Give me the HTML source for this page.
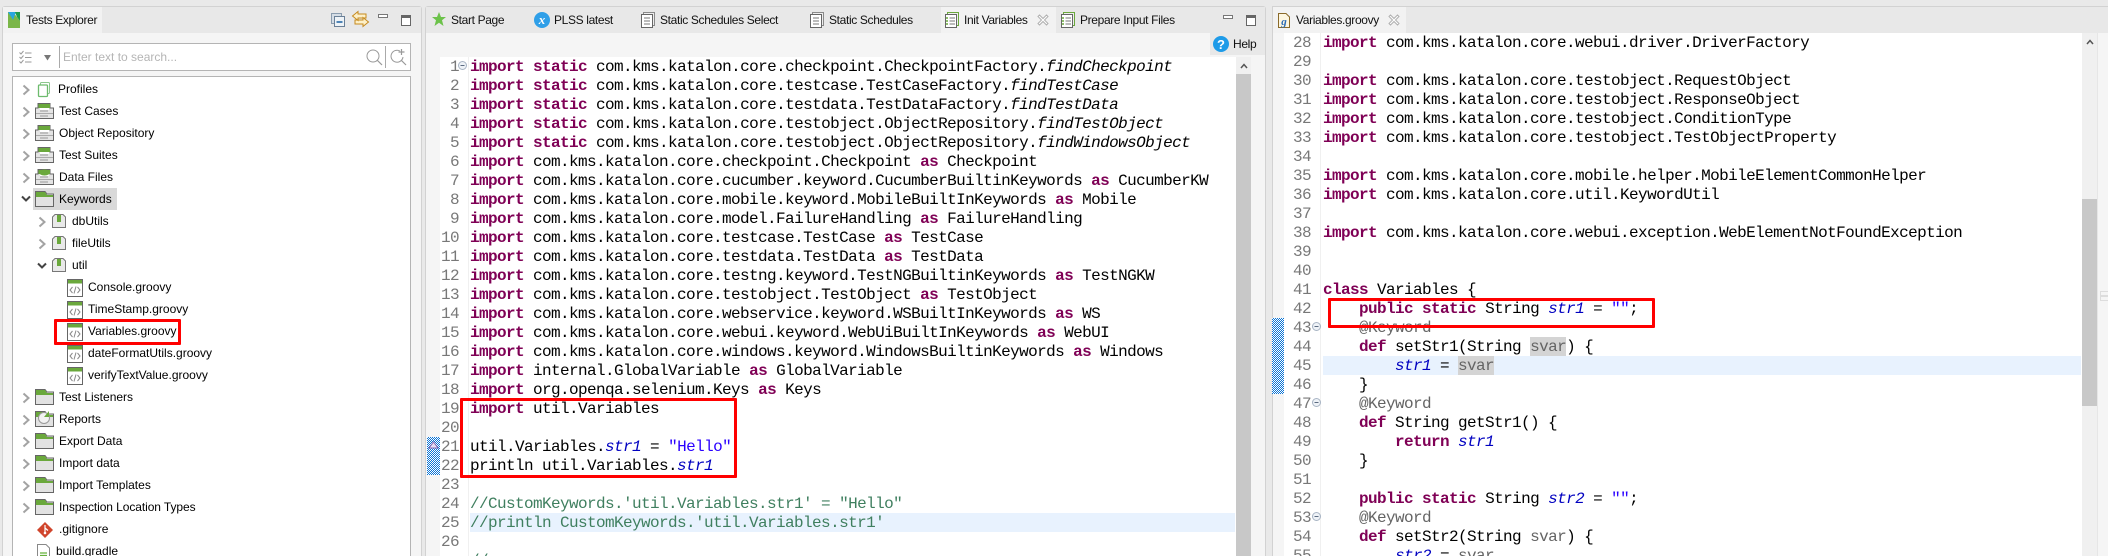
<!DOCTYPE html>
<html><head><meta charset="utf-8"><title>Tests Explorer</title>
<style>
html,body{margin:0;padding:0;width:2108px;height:556px;overflow:hidden}
body{background:#e9e9e9;font:12px "Liberation Sans",sans-serif;color:#111}
#p{position:absolute;left:0;top:0;width:2108px;height:556px;overflow:hidden;background:#e9e9e9}
.a{position:absolute}
.t{position:absolute;white-space:nowrap;line-height:16px;color:#111;letter-spacing:-.35px}
.r{position:absolute;white-space:nowrap;line-height:22px;height:22px;color:#000}
svg{position:absolute;overflow:visible}
pre{position:absolute;margin:0;font:16px/19px "Liberation Mono",monospace;letter-spacing:-.6px;color:#000;white-space:pre}
pre.n{color:#787878;text-align:right;letter-spacing:-.6px}
b{color:#7f0055;font-weight:bold}
i{font-style:italic}
i.f{color:#0000c0}
u{text-decoration:none;color:#2a00ff}
s{text-decoration:none;color:#3f7f5f}
em{font-style:normal;color:#646464}
.red{position:absolute;border:3px solid #f00;box-sizing:border-box;border-radius:1px}
.dith{position:absolute;background:repeating-conic-gradient(#0a74d6 0 25%,#fff 0 50%) 0 0/2px 2px}
</style></head><body><div id="p">
<svg width="0" height="0" style="position:absolute">
<defs>
<symbol id="chev" viewBox="0 0 8 12"><path d="M1.5 1.5L6.5 6L1.5 10.5" fill="none" stroke="#a3a3a3" stroke-width="2"/></symbol>
<symbol id="down" viewBox="0 0 10 8"><path d="M1 1.5L5 5.5L9 1.5" fill="none" stroke="#444" stroke-width="2"/></symbol>
<symbol id="folder" viewBox="0 0 19 16"><path d="M.5 5.5V.5H10L12 3H18.5V15.5H.5Z" fill="#e2e2e2" stroke="#666"/><path d="M1 1H10L12 4H18V6H1Z" fill="#6aa83c"/></symbol>
<symbol id="box" viewBox="0 0 19 16"><path d="M3 .5H15V5H18.5V15.5H.5V5H3Z" fill="#e4e4e4" stroke="#666"/><rect x="3.500" y="1" width="11.500" height="4" fill="#6aa83c"/><rect x="5" y="5" width="9" height="2" fill="#fff"/><path d="M1 10.500H18" stroke="#aaa"/><path d="M5 8H13M5 13H13" stroke="#999"/></symbol>
<symbol id="pkg" viewBox="0 0 14 14"><path d="M.5 13.500V3L3 .5H11L13.500 3V13.500Z" fill="#e9e9e9" stroke="#777"/><rect x="5" y="1" width="4" height="7" fill="#6aa83c"/></symbol>
<symbol id="gv" viewBox="0 0 16 18"><rect x=".5" y=".5" width="15" height="17" fill="#fff" stroke="#666"/><rect x="1" y="1" width="14" height="3.500" fill="#6aa83c"/><path d="M5.500 8L3 11L5.500 14M10.500 8L13 11L10.500 14M9 7.500L7 14.500" fill="none" stroke="#888"/></symbol>
<symbol id="tc" viewBox="0 0 14 16"><rect x="2.500" y=".5" width="11" height="13" fill="#eee" stroke="#8a8a8a"/><rect x=".5" y="2.500" width="11" height="13" fill="#fff" stroke="#666"/><path d="M3 6H9M3 9H9M3 12H9" stroke="#777"/></symbol>
<symbol id="tcg" viewBox="0 0 14 16"><rect x="2.500" y=".5" width="11" height="13" fill="#eee" stroke="#6aa83c"/><rect x=".5" y="2.500" width="11" height="13" fill="#fff" stroke="#666"/><path d="M4.500 6H10M4.500 9H10M4.500 12H10" stroke="#777"/><path d="M2 5V7M2 8V10M2 11V13" stroke="#6aa83c" stroke-width="1.500"/></symbol>
<symbol id="fold" viewBox="0 0 9 9"><circle cx="4.500" cy="4.500" r="4" fill="#eef2f7" stroke="#a8b4c4"/><path d="M2.500 4.500H6.500" stroke="#5a6a80"/></symbol>
<symbol id="close" viewBox="0 0 12 12"><path d="M1 2.500L2.500 1L6 4.500L9.500 1L11 2.500L7.500 6L11 9.500L9.500 11L6 7.500L2.500 11L1 9.500L4.500 6Z" fill="#fff" stroke="#b0b0b0"/></symbol>
</defs></svg>

<!-- LEFT PANEL -->
<div class="a" style="left:2px;top:6px;width:420px;height:550px;background:#f5f5f5;border:1px solid #d2d2d2;border-bottom:0;box-sizing:border-box;border-radius:3px 3px 0 0"></div>
<div class="a" style="left:3px;top:7px;width:418px;height:26px;background:#e8e8e8"></div>
<div class="a" style="left:3px;top:7px;width:99px;height:26px;background:#f2f2f2"></div>
<svg style="left:8px;top:12px" width="12" height="16"><path d="M0 0H5L12 9V16H0Z" fill="#7ab648"/><path d="M0 0H8L5 8Z" fill="#29a6e0"/><path d="M7 0H12V9L9 5Z" fill="#1e9c4c"/></svg>
<div class="t" style="left:26px;top:12px">Tests Explorer</div>
<svg style="left:331px;top:13px" width="14" height="14"><rect x=".5" y=".5" width="10" height="10" fill="#d5dde5" stroke="#8a9cae"/><rect x="3.500" y="3.500" width="10" height="10" fill="#eef3f7" stroke="#6a8097"/><path d="M5.500 9H11.500" stroke="#1a5fa0" stroke-width="1.500"/></svg>
<svg style="left:352px;top:11px" width="17" height="16"><path d="M6 .5L.5 5L6 9.500V7H14V3H6ZM11 6.500V9H3V13H11V15.500L16.500 11Z" fill="#fdf0c8" stroke="#c68a1e"/></svg>
<div class="a" style="left:378px;top:14px;width:8px;height:2px;border:1px solid #777;background:#fff"></div>
<div class="a" style="left:401px;top:15px;width:8px;height:7px;border:1px solid #666;border-top:3px solid #666;background:#fff"></div>

<!-- search box -->
<div class="a" style="left:12px;top:43px;width:399px;height:28px;background:#fff;border:1px solid #b4b4b4;box-sizing:border-box"></div>
<svg style="left:19px;top:50px" width="13" height="14"><path d="M.5 2.500L2 4L4.500 1M.5 7L2 8.500L4.500 5.500M.5 11.500L2 13L4.500 10M6 3H12.500M6 7.500H12.500M6 12H12.500" fill="none" stroke="#999"/></svg>
<svg style="left:44px;top:55px" width="7" height="6"><path d="M0 0H7L3.500 5.500Z" fill="#777"/></svg>
<div class="a" style="left:59px;top:46px;width:1px;height:22px;background:#aaa"></div>
<div class="t" style="left:63px;top:49px;color:#b5b5b5;letter-spacing:0">Enter text to search...</div>
<svg style="left:366px;top:49px" width="17" height="17"><circle cx="7" cy="7" r="6" fill="none" stroke="#999"/><path d="M11 11L16 16" stroke="#999" stroke-width="1.200"/></svg>
<div class="a" style="left:385px;top:46px;width:1px;height:22px;background:#aaa"></div>
<svg style="left:390px;top:49px" width="17" height="17"><path d="M10 2A6 6 0 1 0 13 8" fill="none" stroke="#999"/><path d="M11 11L16 16M11.500 0V6M8.500 3H14.500" stroke="#999" stroke-width="1.200"/></svg>

<!-- tree -->
<div class="a" style="left:12px;top:76px;width:399px;height:490px;background:#fff;border:1px solid #b4b4b4;box-sizing:border-box"></div>
<div class="a" style="left:33px;top:188px;width:84px;height:22px;background:#d9d9d9"></div>

<svg style="left:22px;top:84px" width="8" height="12"><use href="#chev"/></svg>
<svg style="left:38px;top:82px" width="12" height="15"><rect x="2.500" y=".5" width="9" height="11" rx="1" fill="#fff" stroke="#8cc88c"/><rect x=".5" y="3" width="9" height="11.500" fill="#fff" stroke="#6dbb6d" stroke-width="1.300" rx="1"/></svg>
<div class="r" style="left:58px;top:78px">Profiles</div>

<svg style="left:22px;top:106px" width="8" height="12"><use href="#chev"/></svg>
<svg style="left:35px;top:103px" width="19" height="16"><use href="#box"/></svg>
<div class="r" style="left:59px;top:100px">Test Cases</div>

<svg style="left:22px;top:128px" width="8" height="12"><use href="#chev"/></svg>
<svg style="left:35px;top:125px" width="19" height="16"><use href="#box"/></svg>
<div class="r" style="left:59px;top:122px">Object Repository</div>

<svg style="left:22px;top:150px" width="8" height="12"><use href="#chev"/></svg>
<svg style="left:35px;top:147px" width="19" height="16"><use href="#box"/></svg>
<div class="r" style="left:59px;top:144px">Test Suites</div>

<svg style="left:22px;top:172px" width="8" height="12"><use href="#chev"/></svg>
<svg style="left:35px;top:169px" width="19" height="16"><use href="#box"/></svg>
<svg style="left:39px;top:169px" width="11" height="7"><ellipse cx="5.500" cy="3.500" rx="5.500" ry="3" fill="#6aa83c"/></svg>
<div class="r" style="left:59px;top:166px">Data Files</div>

<svg style="left:21px;top:195px" width="10" height="8"><use href="#down"/></svg>
<svg style="left:35px;top:191px" width="19" height="16"><use href="#folder"/></svg>
<div class="r" style="left:59px;top:188px">Keywords</div>

<svg style="left:38px;top:216px" width="8" height="12"><use href="#chev"/></svg>
<svg style="left:52px;top:214px" width="14" height="14"><use href="#pkg"/></svg>
<div class="r" style="left:72px;top:210px">dbUtils</div>

<svg style="left:38px;top:238px" width="8" height="12"><use href="#chev"/></svg>
<svg style="left:52px;top:236px" width="14" height="14"><use href="#pkg"/></svg>
<div class="r" style="left:72px;top:232px">fileUtils</div>

<svg style="left:37px;top:262px" width="10" height="8"><use href="#down"/></svg>
<svg style="left:52px;top:258px" width="14" height="14"><use href="#pkg"/></svg>
<div class="r" style="left:72px;top:254px">util</div>

<svg style="left:67px;top:279px" width="16" height="18"><use href="#gv"/></svg>
<div class="r" style="left:88px;top:276px">Console.groovy</div>
<svg style="left:67px;top:301px" width="16" height="18"><use href="#gv"/></svg>
<div class="r" style="left:88px;top:298px">TimeStamp.groovy</div>
<svg style="left:67px;top:323px" width="16" height="18"><use href="#gv"/></svg>
<div class="r" style="left:88px;top:320px">Variables.groovy</div>
<svg style="left:67px;top:345px" width="16" height="18"><use href="#gv"/></svg>
<div class="r" style="left:88px;top:342px">dateFormatUtils.groovy</div>
<svg style="left:67px;top:367px" width="16" height="18"><use href="#gv"/></svg>
<div class="r" style="left:88px;top:364px">verifyTextValue.groovy</div>

<svg style="left:22px;top:392px" width="8" height="12"><use href="#chev"/></svg>
<svg style="left:35px;top:389px" width="19" height="16"><use href="#folder"/></svg>
<div class="r" style="left:59px;top:386px">Test Listeners</div>

<svg style="left:22px;top:414px" width="8" height="12"><use href="#chev"/></svg>
<svg style="left:35px;top:411px" width="19" height="16"><use href="#folder"/></svg>
<svg style="left:38px;top:411px" width="13" height="12"><circle cx="6" cy="7" r="5.500" fill="#f2f2f2" stroke="#999"/><path d="M6 6L11 0V6Z" fill="#6aa83c"/></svg>
<div class="r" style="left:59px;top:408px">Reports</div>

<svg style="left:22px;top:436px" width="8" height="12"><use href="#chev"/></svg>
<svg style="left:35px;top:433px" width="19" height="16"><use href="#folder"/></svg>
<div class="r" style="left:59px;top:430px">Export Data</div>

<svg style="left:22px;top:458px" width="8" height="12"><use href="#chev"/></svg>
<svg style="left:35px;top:455px" width="19" height="16"><use href="#folder"/></svg>
<div class="r" style="left:59px;top:452px">Import data</div>

<svg style="left:22px;top:480px" width="8" height="12"><use href="#chev"/></svg>
<svg style="left:35px;top:477px" width="19" height="16"><use href="#folder"/></svg>
<div class="r" style="left:59px;top:474px">Import Templates</div>

<svg style="left:22px;top:502px" width="8" height="12"><use href="#chev"/></svg>
<svg style="left:35px;top:499px" width="19" height="16"><use href="#folder"/></svg>
<div class="r" style="left:59px;top:496px;letter-spacing:-.08px">Inspection Location Types</div>

<svg style="left:37px;top:522px" width="16" height="16"><path d="M8 0L16 8L8 16L0 8Z" fill="#d0452c"/><path d="M8 3V10M8 6L11 8.500" stroke="#fff" stroke-width="1.200" fill="none"/><circle cx="8" cy="11" r="1.300" fill="#fff"/></svg>
<div class="r" style="left:59px;top:518px">.gitignore</div>

<svg style="left:37px;top:544px" width="13" height="16"><path d="M.5 .5H9L12.500 4V15.500H.5Z" fill="#fff" stroke="#888"/><path d="M3 9H10M3 11.500H10M3 14H10" stroke="#66b23c" stroke-width="1.300"/></svg>
<div class="r" style="left:56px;top:540px">build.gradle</div>

<div class="red" style="left:54px;top:319px;width:127px;height:26px"></div>

<!-- MIDDLE PANEL -->
<div class="a" style="left:425px;top:6px;width:841px;height:550px;background:#f5f5f5;border:1px solid #d2d2d2;border-bottom:0;box-sizing:border-box;border-radius:3px 3px 0 0"></div>
<div class="a" style="left:426px;top:7px;width:839px;height:26px;background:#e8e8e8"></div>
<div class="a" style="left:941px;top:7px;width:115px;height:26px;background:#f2f2f2"></div>

<svg style="left:432px;top:12px" width="14" height="14"><path d="M7 0L9 5H14L10 8.300L11.500 14L7 10.700L2.500 14L4 8.300L0 5H5Z" fill="#6cc24a"/></svg>
<div class="t" style="left:451px;top:12px">Start Page</div>
<svg style="left:534px;top:12px" width="16" height="16"><circle cx="8" cy="8" r="8" fill="#2f9fe8"/><text x="8" y="12" font-family="Liberation Serif,serif" font-size="13" font-style="italic" font-weight="bold" fill="#fff" text-anchor="middle">x</text></svg>
<div class="t" style="left:554px;top:12px">PLSS latest</div>
<svg style="left:641px;top:12px" width="14" height="16"><use href="#tc"/></svg>
<div class="t" style="left:660px;top:12px">Static Schedules Select</div>
<svg style="left:810px;top:12px" width="14" height="16"><use href="#tc"/></svg>
<div class="t" style="left:829px;top:12px">Static Schedules</div>
<svg style="left:945px;top:12px" width="14" height="16"><use href="#tcg"/></svg>
<div class="t" style="left:964px;top:12px">Init Variables</div>
<svg style="left:1037px;top:14px" width="12" height="12"><use href="#close"/></svg>
<svg style="left:1061px;top:12px" width="14" height="16"><use href="#tcg"/></svg>
<div class="t" style="left:1080px;top:12px">Prepare Input Files</div>
<div class="a" style="left:1223px;top:15px;width:8px;height:2px;border:1px solid #777;background:#fff"></div>
<div class="a" style="left:1246px;top:15px;width:8px;height:7px;border:1px solid #666;border-top:3px solid #666;background:#fff"></div>

<div class="a" style="left:1210px;top:33px;width:55px;height:22px;background:#e8e8e8"></div>
<svg style="left:1213px;top:36px" width="16" height="16"><circle cx="8" cy="8" r="8" fill="#1e9be8"/><text x="8" y="13" font-family="Liberation Sans,sans-serif" font-size="13" font-weight="bold" fill="#fff" text-anchor="middle">?</text></svg>
<div class="t" style="left:1233px;top:36px">Help</div>

<div class="a" style="left:440px;top:57px;width:796px;height:499px;background:#fff"></div>
<div class="a" style="left:468px;top:57px;width:1px;height:499px;background:#f0f0f0"></div>
<div class="a" style="left:470px;top:513px;width:765px;height:19px;background:#e8f2fe"></div>
<div class="a" style="left:1236px;top:57px;width:15px;height:499px;background:#c8c8c8"></div>
<div class="a" style="left:1236px;top:57px;width:15px;height:17px;background:#f0f0f0"></div>
<svg style="left:1240px;top:63px" width="8" height="6"><path d="M1 5L4 1.500L7 5" fill="none" stroke="#555" stroke-width="1.500"/></svg>
<div class="dith" style="left:427px;top:437px;width:13px;height:38px"></div>
<svg style="left:428px;top:441px" width="11" height="8"><path d="M1 7L5.500 1L10 7Z" fill="#e8dff5" stroke="#8a6ab5"/></svg>
<svg style="left:458px;top:61px" width="9" height="9"><use href="#fold"/></svg>

<pre class="n" style="left:436px;top:58px;width:23px">1
2
3
4
5
6
7
8
9
10
11
12
13
14
15
16
17
18
19
20
21
22
23
24
25
26</pre>
<pre style="left:470px;top:58px"><b>import</b> <b>static</b> com.kms.katalon.core.checkpoint.CheckpointFactory.<i>findCheckpoint</i>
<b>import</b> <b>static</b> com.kms.katalon.core.testcase.TestCaseFactory.<i>findTestCase</i>
<b>import</b> <b>static</b> com.kms.katalon.core.testdata.TestDataFactory.<i>findTestData</i>
<b>import</b> <b>static</b> com.kms.katalon.core.testobject.ObjectRepository.<i>findTestObject</i>
<b>import</b> <b>static</b> com.kms.katalon.core.testobject.ObjectRepository.<i>findWindowsObject</i>
<b>import</b> com.kms.katalon.core.checkpoint.Checkpoint <b>as</b> Checkpoint
<b>import</b> com.kms.katalon.core.cucumber.keyword.CucumberBuiltinKeywords <b>as</b> CucumberKW
<b>import</b> com.kms.katalon.core.mobile.keyword.MobileBuiltInKeywords <b>as</b> Mobile
<b>import</b> com.kms.katalon.core.model.FailureHandling <b>as</b> FailureHandling
<b>import</b> com.kms.katalon.core.testcase.TestCase <b>as</b> TestCase
<b>import</b> com.kms.katalon.core.testdata.TestData <b>as</b> TestData
<b>import</b> com.kms.katalon.core.testng.keyword.TestNGBuiltinKeywords <b>as</b> TestNGKW
<b>import</b> com.kms.katalon.core.testobject.TestObject <b>as</b> TestObject
<b>import</b> com.kms.katalon.core.webservice.keyword.WSBuiltInKeywords <b>as</b> WS
<b>import</b> com.kms.katalon.core.webui.keyword.WebUiBuiltInKeywords <b>as</b> WebUI
<b>import</b> com.kms.katalon.core.windows.keyword.WindowsBuiltinKeywords <b>as</b> Windows
<b>import</b> internal.GlobalVariable <b>as</b> GlobalVariable
<b>import</b> org.openqa.selenium.Keys <b>as</b> Keys
<b>import</b> util.Variables

util.Variables.<i class="f">str1</i> = <u>"Hello"</u>
println util.Variables.<i class="f">str1</i>

<s>//CustomKeywords.'util.Variables.str1' = "Hello"</s>
<s>//println CustomKeywords.'util.Variables.str1'</s>

<s>//</s></pre>
<div class="red" style="left:460px;top:398px;width:277px;height:80px"></div>

<!-- RIGHT PANEL -->
<div class="a" style="left:1272px;top:6px;width:836px;height:550px;background:#f5f5f5;border-left:1px solid #d2d2d2;border-top:1px solid #d2d2d2;box-sizing:border-box"></div>
<div class="a" style="left:1273px;top:7px;width:835px;height:26px;background:#e8e8e8"></div>
<div class="a" style="left:1273px;top:7px;width:133px;height:26px;background:#f2f2f2"></div>
<svg style="left:1278px;top:13px" width="12" height="15"><path d="M.5 .5H8L11.500 4V14.500H.5Z" fill="#fdf6e0" stroke="#8a6a2a"/><text x="6" y="12" font-family="Liberation Serif,serif" font-size="11" font-style="italic" font-weight="bold" fill="#2a6ab5" text-anchor="middle">g</text></svg>
<div class="t" style="left:1296px;top:12px">Variables.groovy</div>
<svg style="left:1388px;top:14px" width="12" height="12"><use href="#close"/></svg>

<div class="a" style="left:1284px;top:33px;width:798px;height:523px;background:#fff"></div>
<div class="a" style="left:1320px;top:33px;width:1px;height:523px;background:#f0f0f0"></div>
<div class="a" style="left:1323px;top:356px;width:758px;height:19px;background:#e8f2fe"></div>
<div class="a" style="left:1530px;top:337px;width:36px;height:19px;background:#d4d4d4"></div>
<div class="a" style="left:1458px;top:356px;width:36px;height:19px;background:#d4d4d4"></div>
<div class="a" style="left:2082px;top:33px;width:15px;height:523px;background:#f0f0f0"></div>
<div class="a" style="left:2082px;top:199px;width:15px;height:207px;background:#c8c8c8"></div>
<svg style="left:2086px;top:39px" width="8" height="6"><path d="M1 5L4 1.500L7 5" fill="none" stroke="#555" stroke-width="1.500"/></svg>
<div class="a" style="left:2097px;top:33px;width:1px;height:523px;background:#e6e6e6"></div>
<div class="a" style="left:2100px;top:291px;width:8px;height:3px;border:1px solid #ddd;border-right:0"></div>
<div class="a" style="left:2100px;top:296px;width:8px;height:3px;border:1px solid #ddd;border-right:0"></div>
<div class="dith" style="left:1272px;top:318px;width:12px;height:76px"></div>
<svg style="left:1312px;top:322px" width="9" height="9"><use href="#fold"/></svg>
<svg style="left:1312px;top:398px" width="9" height="9"><use href="#fold"/></svg>
<svg style="left:1312px;top:512px" width="9" height="9"><use href="#fold"/></svg>

<pre class="n" style="left:1284px;top:34px;width:27px">28
29
30
31
32
33
34
35
36
37
38
39
40
41
42
43
44
45
46
47
48
49
50
51
52
53
54
55</pre>
<pre style="left:1323px;top:34px"><b>import</b> com.kms.katalon.core.webui.driver.DriverFactory

<b>import</b> com.kms.katalon.core.testobject.RequestObject
<b>import</b> com.kms.katalon.core.testobject.ResponseObject
<b>import</b> com.kms.katalon.core.testobject.ConditionType
<b>import</b> com.kms.katalon.core.testobject.TestObjectProperty

<b>import</b> com.kms.katalon.core.mobile.helper.MobileElementCommonHelper
<b>import</b> com.kms.katalon.core.util.KeywordUtil

<b>import</b> com.kms.katalon.core.webui.exception.WebElementNotFoundException


<b>class</b> Variables {
    <b>public</b> <b>static</b> String <i class="f">str1</i> = <u>""</u>;
    <em>@Keyword</em>
    <b>def</b> setStr1(String <em>svar</em>) {
        <i class="f">str1</i> = <em>svar</em>
    }
    <em>@Keyword</em>
    <b>def</b> String getStr1() {
        <b>return</b> <i class="f">str1</i>
    }

    <b>public</b> <b>static</b> String <i class="f">str2</i> = <u>""</u>;
    <em>@Keyword</em>
    <b>def</b> setStr2(String <em>svar</em>) {
        <i class="f">str2</i> = <em>svar</em></pre>
<div class="red" style="left:1328px;top:298px;width:327px;height:30px"></div>
</div></body></html>
